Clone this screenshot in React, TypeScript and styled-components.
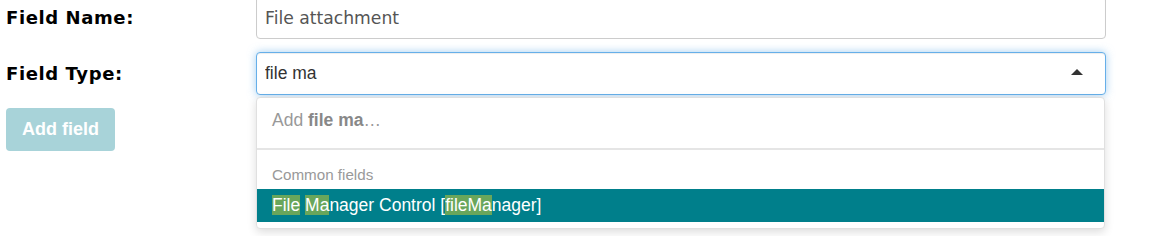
import React from 'react';
import styled, { createGlobalStyle } from 'styled-components';

const GlobalStyle = createGlobalStyle`
  html, body {
    margin: 0;
    padding: 0;
    background: #fff;
    overflow: hidden;
  }
`;

const Page = styled.div`
  width: 1149px;
  height: 240px;
  padding-left: 6px;
  box-sizing: border-box;
`;

const Form = styled.form`
  margin-top: -4px;
  display: flex;
  flex-direction: column;
  align-items: flex-start;
  gap: 13px;
`;

const Row = styled.div`
  display: grid;
  grid-template-columns: 250px 850px;
  align-items: center;
  height: 43px;
`;

const Label = styled.label`
  font-family: 'DejaVu Sans', Verdana, sans-serif;
  font-weight: bold;
  font-size: 18px;
  letter-spacing: 0.6px;
  color: #000;
`;

const TextInput = styled.input<{ $focused?: boolean }>`
  box-sizing: border-box;
  width: 100%;
  height: 43px;
  margin: 0;
  padding: 0 40px 0 8px;
  border: 1px solid ${(p) => (p.$focused ? '#66afe9' : '#ccc')};
  border-radius: 4px;
  font-family: ${(p) =>
    p.$focused ? "'Liberation Sans', Arial, sans-serif" : "'DejaVu Sans', Verdana, sans-serif"};
  font-size: ${(p) => (p.$focused ? '17.5px' : '17.2px')};
  color: ${(p) => (p.$focused ? '#333' : '#555')};
  background: #fff;
  outline: none;
  box-shadow: ${(p) =>
    p.$focused
      ? 'inset 0 1px 1px rgba(0,0,0,.075), 0 0 8px rgba(102,175,233,.6)'
      : 'inset 0 1px 1px rgba(0,0,0,.075)'};
`;

const Combo = styled.div`
  position: relative;
  width: 850px;
`;

const Caret = styled.span`
  position: absolute;
  right: 23px;
  top: 17px;
  width: 0;
  height: 0;
  border-left: 6px solid transparent;
  border-right: 6px solid transparent;
  border-bottom: 6px solid #333;
`;

const Menu = styled.div`
  position: absolute;
  top: 45px;
  left: 0;
  right: 1px;
  z-index: 5;
  background: #fff;
  border: 1px solid #e0e0e0;
  border-radius: 4px;
  box-shadow: 0 3px 10px rgba(0, 0, 0, 0.14);
  padding-bottom: 6px;
  font-family: 'Liberation Sans', Arial, sans-serif;
`;

const CreateOption = styled.div`
  height: 52px;
  padding: 10px 15px 0;
  box-sizing: border-box;
  font-size: 17.5px;
  line-height: 24px;
  color: #999;
  border-bottom: 2px solid #e5e5e5;

  b {
    color: #888;
  }
`;

const GroupTitle = styled.div`
  padding: 15px 15px 4px;
  font-size: 15.2px;
  line-height: 20px;
  color: #999;
`;

const Option = styled.div<{ $active?: boolean }>`
  height: 33px;
  padding: 6px 15px 0;
  box-sizing: border-box;
  font-size: 17.5px;
  line-height: 20px;
  color: ${(p) => (p.$active ? '#fff' : '#333')};
  background: ${(p) => (p.$active ? '#007f8b' : 'transparent')};
  white-space: pre;
`;

const Match = styled.mark`
  background: #69a65b;
  color: #fff;
`;

const AddButton = styled.button`
  height: 43px;
  padding: 0 16px;
  border: none;
  border-radius: 4px;
  background: #a8d3d9;
  color: #fff;
  font-family: 'Liberation Sans', Arial, sans-serif;
  font-weight: bold;
  font-size: 18px;
  cursor: not-allowed;
`;

export default function App() {
  return (
    <Page>
      <GlobalStyle />
      <Form onSubmit={(e) => e.preventDefault()}>
        <Row>
          <Label>Field Name:</Label>
          <TextInput value="File attachment" readOnly />
        </Row>
        <Row>
          <Label>Field Type:</Label>
          <Combo>
            <TextInput $focused value="file ma" readOnly />
            <Caret />
            <Menu>
              <CreateOption>
                Add <b>file ma</b>…
              </CreateOption>
              <GroupTitle>Common fields</GroupTitle>
              <Option $active>
                <Match>File</Match> <Match>Ma</Match>nager Control [<Match>fileMa</Match>nager]
              </Option>
            </Menu>
          </Combo>
        </Row>
        <AddButton type="button" disabled>
          Add field
        </AddButton>
      </Form>
    </Page>
  );
}
